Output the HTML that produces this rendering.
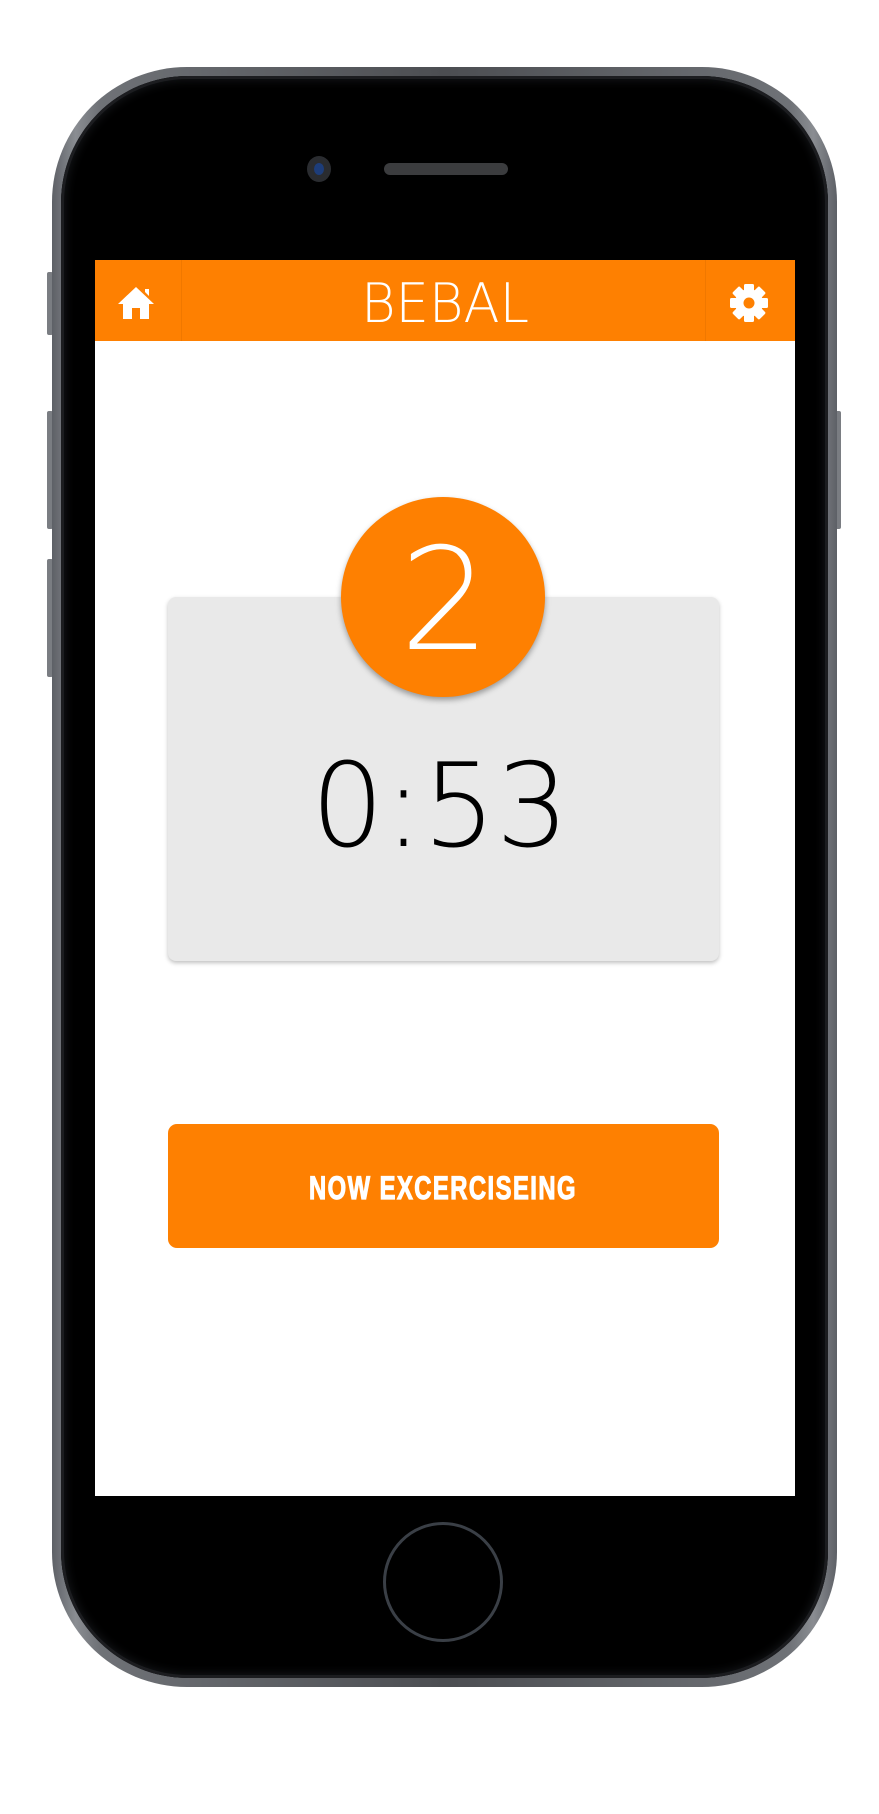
<!DOCTYPE html>
<html><head><meta charset="utf-8"><style>
html,body{margin:0;padding:0;background:#fff;width:879px;height:1814px;overflow:hidden;position:relative;font-family:"Liberation Sans",sans-serif}
.abs{position:absolute}
.rim{left:52px;top:67px;width:785px;height:1620px;border-radius:135px;background:linear-gradient(90deg,#5d6066,#8a8d92 3%,#6f7277 6%,#4c4e52 50%,#6f7277 94%,#8a8d92 97%,#5d6066)}
.inner{left:61px;top:76px;width:767px;height:1602px;border-radius:127px;background:#000;box-shadow:inset 0 0 0 3px #1c1d20,inset 0 0 10px 4px #15171a}
.btn{background:#7a7d82;border-radius:2px}
.screen{left:95px;top:260px;width:700px;height:1236px;background:#fff}
.header{left:0;top:0;width:700px;height:81px;background:#fe8001}
</style></head><body>
<div class="abs btn" style="left:47px;top:272px;width:6px;height:63px"></div>
<div class="abs btn" style="left:47px;top:411px;width:6px;height:118px"></div>
<div class="abs btn" style="left:47px;top:559px;width:6px;height:118px"></div>
<div class="abs btn" style="left:835px;top:411px;width:6px;height:118px"></div>
<div class="abs rim"></div>
<div class="abs inner"></div>
<div class="abs" style="left:307px;top:156px;width:24px;height:26px;border-radius:50%;background:#2a2c30"></div>
<div class="abs" style="left:314px;top:163px;width:10px;height:12px;border-radius:50%;background:#1d3d7a"></div>
<div class="abs" style="left:384px;top:163px;width:124px;height:12px;border-radius:6px;background:#3b3c3e"></div>
<div class="abs" style="left:383px;top:1522px;width:120px;height:120px;border-radius:50%;border:3px solid #3a3f46;box-sizing:border-box"></div>
<div class="abs screen">
 <div class="abs header">
  <div class="abs" style="left:86px;top:0;width:1px;height:81px;background:#f07800"></div>
  <div class="abs" style="left:610px;top:0;width:1px;height:81px;background:#f07800"></div>
  <svg class="abs" style="left:21px;top:24px" width="40" height="36" viewBox="0 0 40 36"><path d="M20 3 L38 20 L33 20 L33 35 L24 35 L24 24 L16 24 L16 35 L7 35 L7 20 L2 20 Z M29 5 L33 5 L33 12 L29 8 Z" fill="#fff"/></svg>
  <svg class="abs" style="left:634px;top:23px" width="40" height="40" viewBox="-20 -20 40 40"><g fill="#fff"><circle r="14"/><g id="t"><rect x="-5" y="-19" width="10" height="8" rx="1.5"/></g><use href="#t" transform="rotate(45)"/><use href="#t" transform="rotate(90)"/><use href="#t" transform="rotate(135)"/><use href="#t" transform="rotate(180)"/><use href="#t" transform="rotate(225)"/><use href="#t" transform="rotate(270)"/><use href="#t" transform="rotate(315)"/></g><circle r="5.5" fill="#fe8001"/></svg>
  <svg class="abs" style="left:262px;top:0" width="180" height="81"><text x="88" y="62" text-anchor="middle" font-family="DejaVu Sans" font-weight="200" font-size="54" fill="#fff" textLength="168" lengthAdjust="spacingAndGlyphs">BEBAL</text></svg>
 </div>
 <div class="abs" style="left:73px;top:337px;width:551px;height:364px;background:#e9e9e9;border-radius:8px;box-shadow:0 2px 4px rgba(0,0,0,.25)"></div>
 <svg class="abs" style="left:73px;top:337px" width="551" height="364"><text x="272" y="249" text-anchor="middle" font-family="DejaVu Sans" font-weight="200" font-size="116" fill="#000" textLength="258" lengthAdjust="spacingAndGlyphs">0:53</text></svg>
 <div class="abs" style="left:246px;top:237px;width:204px;height:200px;border-radius:50%;background:#fe8001;box-shadow:0 3px 6px rgba(0,0,0,.35)"></div>
 <svg class="abs" style="left:246px;top:237px" width="204" height="200"><text x="104" y="152" text-anchor="middle" font-family="DejaVu Sans" font-weight="200" font-size="142" fill="#fff">2</text></svg>
 <div class="abs" style="left:73px;top:864px;width:551px;height:124px;background:#fe8001;border-radius:9px"></div>
 <svg class="abs" style="left:73px;top:864px" width="551" height="124"><text x="275" y="75" text-anchor="middle" font-family="Liberation Sans Narrow, Liberation Sans, sans-serif" font-weight="bold" font-size="32" fill="#fff" stroke="#fff" stroke-width="1.2" letter-spacing="2" textLength="268" lengthAdjust="spacingAndGlyphs">NOW EXCERCISEING</text></svg>
</div>
</body></html>
